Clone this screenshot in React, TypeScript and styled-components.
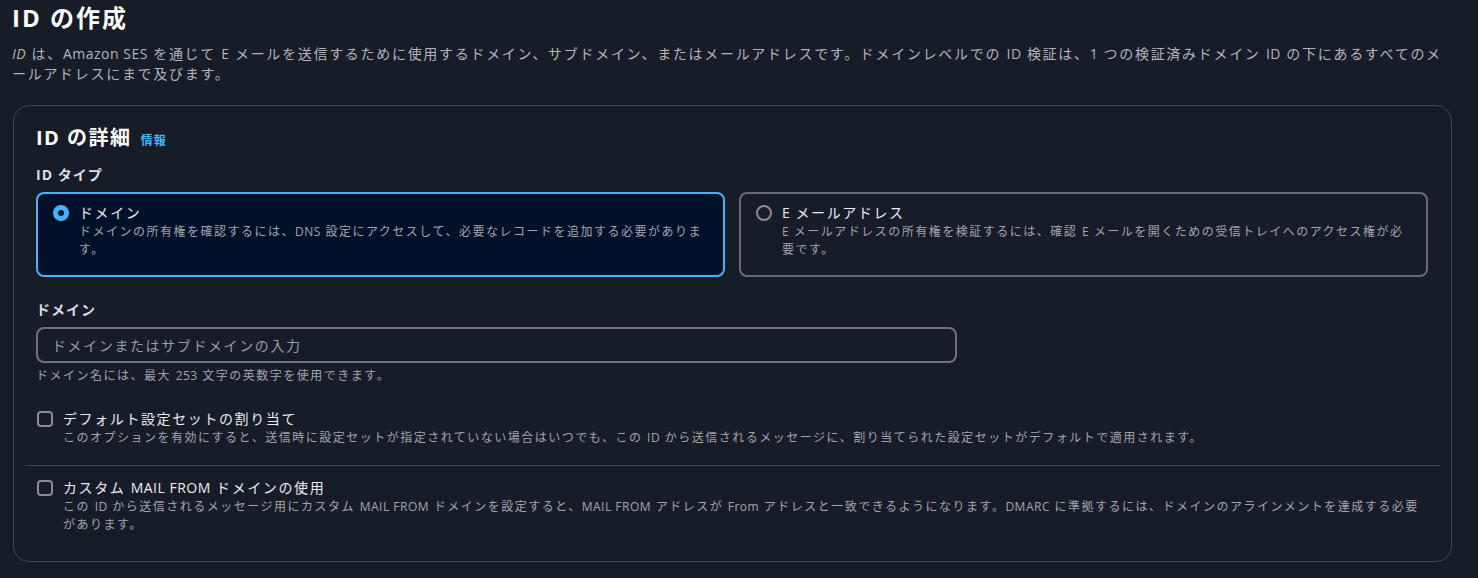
import { useState } from "react";
import styled, { createGlobalStyle } from "styled-components";

const GlobalStyle = createGlobalStyle`
  html, body {
    margin: 0;
    padding: 0;
    background: #161d26;
  }
  body {
    font-family: "Open Sans", "Noto Sans CJK JP", sans-serif;
    color: #c6c6cd;
    -webkit-font-smoothing: antialiased;
  }
`;

// latin runs keep tight tracking; the kana/kanji around them are spaced wider
const En = styled.span`
  letter-spacing: 0.5px;
`;

const Page = styled.div`
  padding: 4px 26px 16px 12px;
  min-height: 578px;
  box-sizing: border-box;
`;

const Title = styled.h1`
  margin: 0;
  font-size: 24px;
  line-height: 28px;
  font-weight: 700;
  letter-spacing: 2px;
  color: #fbfbfb;
`;

const Lead = styled.p`
  margin: 12px 0 0 0;
  font-size: 14px;
  line-height: 20px;
  letter-spacing: 1.7px;
  color: #b4b4bb;
`;

const Container = styled.section`
  margin: 21px 0 0 1px;
  border: 1px solid #414750;
  border-radius: 16px;
  padding: 20px 23px 27px 22px;
`;

const HeadingRow = styled.div`
  display: flex;
  align-items: baseline;
  gap: 9px;
  height: 24px;
`;

const Heading = styled.h2`
  margin: 0;
  font-size: 20px;
  line-height: 24px;
  font-weight: 700;
  letter-spacing: 1.5px;
  color: #fbfbfb;
`;

const InfoLink = styled.a`
  font-size: 12px;
  font-weight: 700;
  letter-spacing: 1px;
  color: #42b4ff;
  text-decoration: none;
`;

const FieldLabel = styled.div<{ $top: number }>`
  margin-top: ${(p) => p.$top}px;
  font-size: 14px;
  line-height: 20px;
  font-weight: 700;
  letter-spacing: 1px;
  color: #dedee3;
`;

const Tiles = styled.div`
  margin-top: 7px;
  display: grid;
  grid-template-columns: 1fr 1fr;
  gap: 14px;
`;

const Tile = styled.label<{ $selected: boolean }>`
  display: flex;
  gap: 10px;
  align-items: flex-start;
  box-sizing: border-box;
  height: 85px;
  padding: 9px 16px 15px 15px;
  border-radius: 8px;
  border: 2px solid ${(p) => (p.$selected ? "#42b4ff" : "#676b73")};
  background: ${(p) => (p.$selected ? "#001129" : "transparent")};
  cursor: pointer;
`;

const Radio = styled.span<{ $checked: boolean }>`
  flex: none;
  width: 16px;
  height: 16px;
  margin-top: 2px;
  box-sizing: border-box;
  border-radius: 50%;
  border: ${(p) => (p.$checked ? "5px solid #42b4ff" : "2px solid #8c8c94")};
  background: ${(p) => (p.$checked ? "#0f141a" : "transparent")};
`;

const OptionText = styled.div`
  display: flex;
  flex-direction: column;
  min-width: 0;
`;

const OptionLabel = styled.span`
  font-size: 14px;
  line-height: 20px;
  letter-spacing: 1.6px;
  color: #ececf0;
`;

const OptionDesc = styled.span`
  font-size: 12px;
  line-height: 18px;
  letter-spacing: 1.5px;
  color: #a4a4ad;
`;

const Input = styled.input`
  display: block;
  margin-top: 7px;
  width: 921px;
  height: 36px;
  box-sizing: border-box;
  padding: 0 14px;
  border: 2px solid #70737a;
  border-radius: 8px;
  background: transparent;
  color: #ececf0;
  font-family: inherit;
  font-size: 14px;
  letter-spacing: 1.6px;
  outline: none;
  &::placeholder {
    color: #9a9aa3;
  }
`;

const Constraint = styled.div`
  margin-top: 4px;
  font-size: 12px;
  line-height: 18px;
  letter-spacing: 1.5px;
  color: #a4a4ad;
`;

const CheckRow = styled.label<{ $top: number }>`
  display: flex;
  gap: 10px;
  align-items: flex-start;
  margin-top: ${(p) => p.$top}px;
  cursor: pointer;
`;

const Box = styled.span<{ $checked: boolean }>`
  flex: none;
  width: 16px;
  height: 16px;
  margin-top: 2px;
  margin-left: 1px;
  box-sizing: border-box;
  border-radius: 4px;
  border: 2px solid ${(p) => (p.$checked ? "#42b4ff" : "#8c8c94")};
  background: ${(p) => (p.$checked ? "#42b4ff" : "transparent")};
`;

const Divider = styled.hr`
  margin: 18px -12px 0 -11px;
  border: none;
  border-top: 1px solid #414750;
  height: 0;
`;

export default function App() {
  const [type, setType] = useState("domain");
  const [defaultSet, setDefaultSet] = useState(false);
  const [mailFrom, setMailFrom] = useState(false);

  return (
    <Page>
      <GlobalStyle />
      <Title>ID の作成</Title>
      <Lead>
        <En>
          <i>ID</i>
        </En>{" "}
        は、<En>Amazon SES</En> を通じて <En>E</En> メールを送信するために使用するドメイン、サブドメイン、またはメールアドレスです。ドメインレベルでの <En>ID</En> 検証は、<En>1</En> つの検証済みドメイン <En>ID</En> の下にあるすべてのメールアドレスにまで及びます。
      </Lead>

      <Container>
        <HeadingRow>
          <Heading>ID の詳細</Heading>
          <InfoLink href="#">情報</InfoLink>
        </HeadingRow>

        <FieldLabel $top={15}>ID タイプ</FieldLabel>
        <Tiles>
          <Tile $selected={type === "domain"} onClick={() => setType("domain")}>
            <Radio $checked={type === "domain"} />
            <OptionText>
              <OptionLabel>ドメイン</OptionLabel>
              <OptionDesc>
                ドメインの所有権を確認するには、<En>DNS</En> 設定にアクセスして、必要なレコードを追加する必要があります。
              </OptionDesc>
            </OptionText>
          </Tile>
          <Tile $selected={type === "email"} onClick={() => setType("email")}>
            <Radio $checked={type === "email"} />
            <OptionText>
              <OptionLabel>
                <En>E</En> メールアドレス
              </OptionLabel>
              <OptionDesc>
                <En>E</En> メールアドレスの所有権を検証するには、確認 <En>E</En> メールを開くための受信トレイへのアクセス権が必要です。
              </OptionDesc>
            </OptionText>
          </Tile>
        </Tiles>

        <FieldLabel $top={23}>ドメイン</FieldLabel>
        <Input placeholder="ドメインまたはサブドメインの入力" />
        <Constraint>
          ドメイン名には、最大 <En>253</En> 文字の英数字を使用できます。
        </Constraint>

        <CheckRow $top={24} onClick={() => setDefaultSet(!defaultSet)}>
          <Box $checked={defaultSet} />
          <OptionText>
            <OptionLabel>デフォルト設定セットの割り当て</OptionLabel>
            <OptionDesc>
              このオプションを有効にすると、送信時に設定セットが指定されていない場合はいつでも、この <En>ID</En> から送信されるメッセージに、割り当てられた設定セットがデフォルトで適用されます。
            </OptionDesc>
          </OptionText>
        </CheckRow>

        <Divider />

        <CheckRow $top={12} onClick={() => setMailFrom(!mailFrom)}>
          <Box $checked={mailFrom} />
          <OptionText>
            <OptionLabel>
              カスタム <En>MAIL FROM</En> ドメインの使用
            </OptionLabel>
            <OptionDesc>
              この <En>ID</En> から送信されるメッセージ用にカスタム <En>MAIL FROM</En> ドメインを設定すると、<En>MAIL FROM</En> アドレスが <En>From</En> アドレスと一致できるようになります。<En>DMARC</En> に準拠するには、ドメインのアラインメントを達成する必要があります。
            </OptionDesc>
          </OptionText>
        </CheckRow>
      </Container>
    </Page>
  );
}
